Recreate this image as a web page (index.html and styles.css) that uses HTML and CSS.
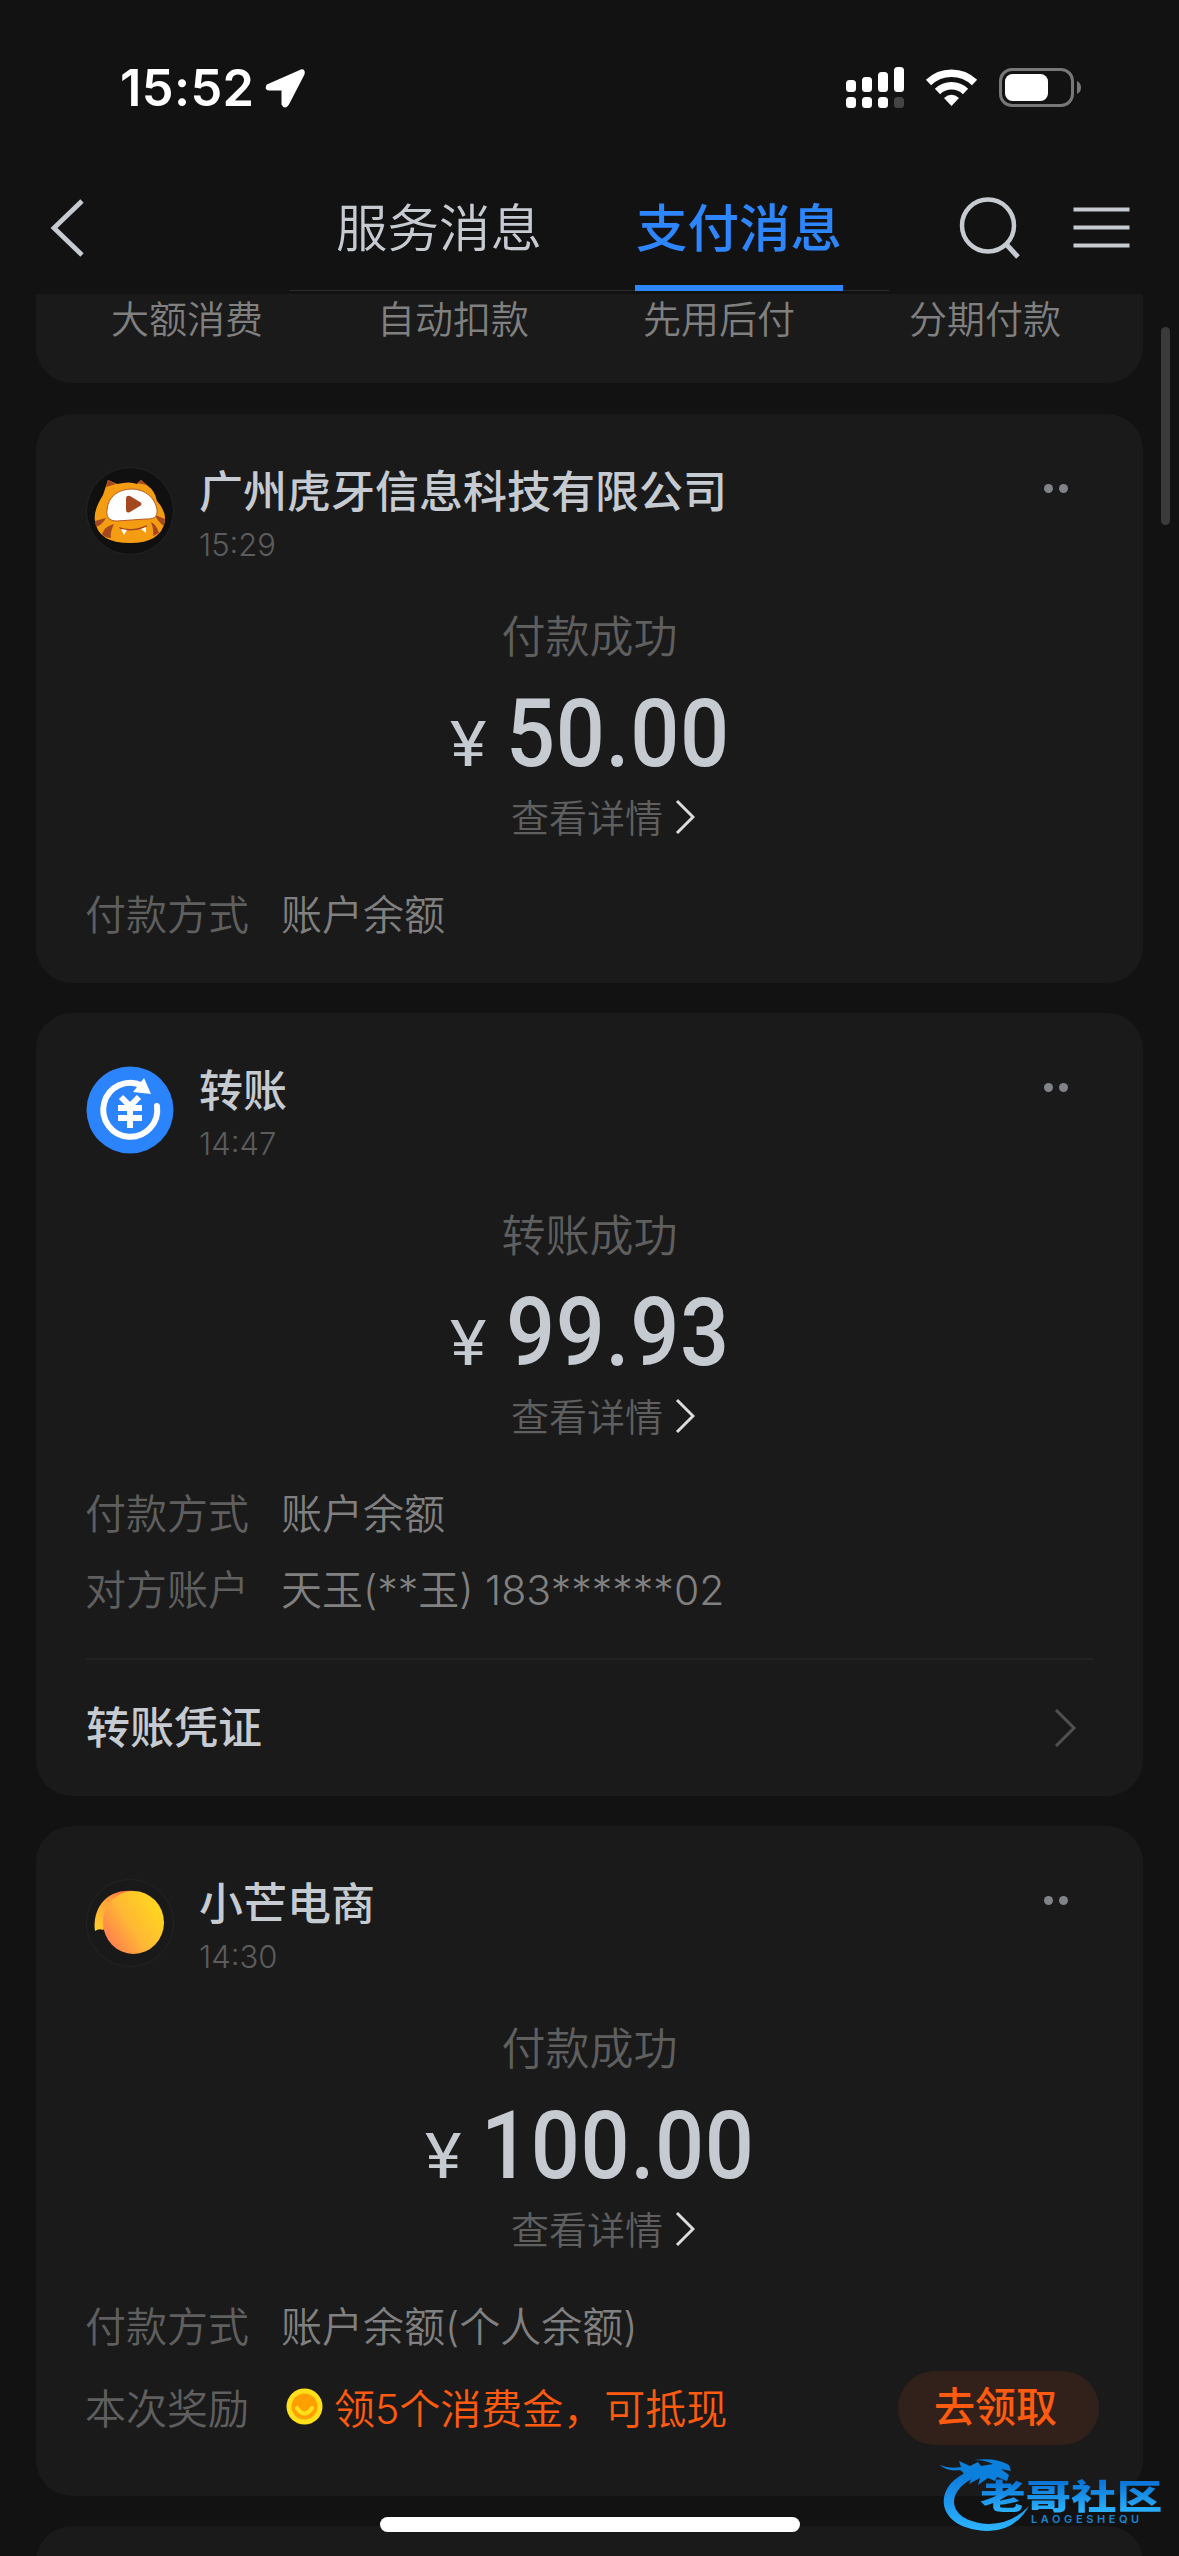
FILE: index.html
```html
<!DOCTYPE html>
<html lang="zh-CN">
<head>
<meta charset="utf-8">
<title>支付消息</title>
<link rel="stylesheet" href="styles.css">
</head>
<body>
<div class="screen">
  <header class="statusbar">
    <span class="clock">15:52</span>
    <svg class="location" width="40" height="40" viewBox="0 0 40 40"><path d="M36 3L3 17.500Q1 21 4 21H18V36Q20 40 22.500 36L38 6Q39 2 36 3Z" fill="#fff" stroke="#fff" stroke-width="3" stroke-linejoin="round"/></svg>
    <svg class="signals" width="236" height="42" viewBox="0 0 236 42">
      <g fill="#fff">
        <rect x="0" y="13" width="10" height="12" rx="3.500"/><rect x="16" y="10" width="10" height="15" rx="3.500"/><rect x="32" y="5" width="10" height="20" rx="3.500"/><rect x="48" y="0" width="10" height="25" rx="3.500"/>
        <rect x="0" y="30" width="10" height="11" rx="3.500"/><rect x="16" y="30" width="10" height="11" rx="3.500"/><rect x="32" y="30" width="10" height="11" rx="3.500"/>
      </g>
      <rect x="48" y="30" width="10" height="11" rx="3.500" fill="#444"/>
      <g fill="none" stroke="#fff" stroke-width="7.500"><path d="M82.500 15.500A33 33 0 0 1 128.500 15.500"/><path d="M91.500 24.500A20 20 0 0 1 119.500 24.500"/></g>
      <path d="M98 31Q105.500 24.500 113 31L105.500 39Z" fill="#fff"/>
      <rect x="154.500" y="2.500" width="72" height="36" rx="11.500" fill="none" stroke="#777" stroke-width="3"/>
      <rect x="159" y="7" width="43" height="27" rx="7.500" fill="#fff"/>
      <path d="M231 14Q235 16 235 20.500T231 27Z" fill="#777"/>
    </svg>
  </header>

  <nav class="navbar">
    <svg class="back" width="36" height="58" viewBox="0 0 36 58"><path d="M32 2L4 29L32 56" fill="none" stroke="#c6cad1" stroke-width="4.800"/></svg>
    <div class="tabs">
      <span class="tab">服务消息</span>
      <span class="tab active">支付消息</span>
    </div>
    <svg class="tools" width="172" height="64" viewBox="0 0 172 64" fill="none" stroke="#c6cad1"><circle cx="30" cy="29.500" r="26" stroke-width="4.500"/><path d="M48 48L60 61" stroke-width="5"/><path d="M115.500 13.500h56M115.500 31.500h56M115.500 49.500h56" stroke-width="4.200"/></svg>
  </nav>

  <main class="feed">
    <section class="shortcuts"><span>大额消费</span><span>自动扣款</span><span>先用后付</span><span>分期付款</span></section>

    <article class="card">
      <div class="head">
        <svg class="avatar" viewBox="0 0 88 88">
          <circle cx="44" cy="44" r="43.500" fill="#101010" stroke="#242424"/>
          <path d="M17 28L22 13L31 17Q44 14 51 17L55 13L62 19Q69 24 71 34Q80 44 79 54Q75 76 44 76Q12 76 9 54Q7 44 17 28Z" fill="#f59d12"/>
          <path d="M20 20L22 13L30 17ZM51 16L55 13L61 18ZM9 54L20 51Q16 58 10 60ZM16 67Q19 59 28 57Q24 65 25 71Q19 71 16 67ZM79 52L69 48Q72 55 78 59ZM73 66Q70 57 65 55Q68 62 67 69Z" fill="#a5481f"/>
          <path d="M21 43C22 29 33 22 46 22S69 31 71 42C72 51 67 52 60 52L31 54C23 54 20 50 21 43Z" fill="#fff" stroke="#b55a20" stroke-width="1"/>
          <path d="M40 32Q40 28 44 29L54 35Q57 37 54 39L44 45Q40 47 40 42Z" fill="#a5481f"/>
          <path d="M33 60Q46 65 61 58L60.500 60Q46 66 34 62Z" fill="#a5481f"/><path d="M35 62L41 63L38 68ZM55 62L60 60L60 66Z" fill="#fff"/>
        </svg>
        <div class="who"><h2>广州虎牙信息科技有限公司</h2><time>15:29</time></div>
        <div class="more"><i></i><i></i></div>
      </div>
      <div class="state">付款成功</div>
      <div class="amount"><span class="yen">¥</span><b>50.00</b></div>
      <div class="detail">查看详情<svg width="20" height="36" viewBox="0 0 20 36"><path d="M2 2L18 18L2 34" fill="none" stroke="#dcdcdc" stroke-width="3"/></svg></div>
      <dl class="rows"><div><dt>付款方式</dt><dd>账户余额</dd></div></dl>
    </article>

    <article class="card transfer">
      <div class="head">
        <svg class="avatar" viewBox="0 0 88 88">
          <circle cx="44" cy="44" r="43.500" fill="#2b84fc"/>
          <path d="M56 19.500A27 27 0 1 0 71 40" fill="none" stroke="#fff" stroke-width="6" stroke-linecap="round"/>
          <path d="M58 12L65 28L47 26Z" fill="#fff"/>
          <path d="M35 31L44 40L53 31M32 42H56M32 52H56M44 40V62" fill="none" stroke="#fff" stroke-width="6"/>
        </svg>
        <div class="who"><h2>转账</h2><time>14:47</time></div>
        <div class="more"><i></i><i></i></div>
      </div>
      <div class="state">转账成功</div>
      <div class="amount"><span class="yen">¥</span><b>99.93</b></div>
      <div class="detail">查看详情<svg width="20" height="36" viewBox="0 0 20 36"><path d="M2 2L18 18L2 34" fill="none" stroke="#dcdcdc" stroke-width="3"/></svg></div>
      <dl class="rows"><div><dt>付款方式</dt><dd>账户余额</dd></div><div><dt>对方账户</dt><dd>天玉(**玉) 183******02</dd></div></dl>
      <div class="voucher"><span>转账凭证</span><svg width="24" height="40" viewBox="0 0 24 40"><path d="M3 2L21 20L3 38" fill="none" stroke="#505050" stroke-width="3"/></svg></div>
    </article>

    <article class="card reward">
      <div class="head">
        <svg class="avatar" viewBox="0 0 88 88">
          <defs><linearGradient id="mango" x1="0" y1=".75" x2=".8" y2=".2"><stop offset="0" stop-color="#ff7b50"/><stop offset=".5" stop-color="#ffb734"/><stop offset="1" stop-color="#ffd321"/></linearGradient><linearGradient id="peel" x1="0" y1="1" x2="1" y2="0"><stop offset="0" stop-color="#ffd22a"/><stop offset=".6" stop-color="#ff9b3b"/><stop offset="1" stop-color="#ff6548"/></linearGradient></defs>
          <circle cx="44" cy="44" r="43.500" fill="#191919" stroke="#242424"/>
          <path d="M9 52C6 29 21 9 48 12L17 51Q13 49 9 52Z" fill="url(#peel)"/>
          <ellipse cx="47.500" cy="43.500" rx="30.500" ry="31.500" fill="url(#mango)"/>
        </svg>
        <div class="who"><h2>小芒电商</h2><time>14:30</time></div>
        <div class="more"><i></i><i></i></div>
      </div>
      <div class="state">付款成功</div>
      <div class="amount"><span class="yen">¥</span><b>100.00</b></div>
      <div class="detail">查看详情<svg width="20" height="36" viewBox="0 0 20 36"><path d="M2 2L18 18L2 34" fill="none" stroke="#dcdcdc" stroke-width="3"/></svg></div>
      <dl class="rows"><div><dt>付款方式</dt><dd>账户余额(个人余额)</dd></div>
        <div><dt>本次奖励</dt><dd class="bonus"><svg width="37" height="37" viewBox="0 0 37 37"><circle cx="18.500" cy="18.500" r="18" fill="#ffe01b"/><circle cx="18.500" cy="18.500" r="13" fill="#ff9f00"/><path d="M11 20Q18.500 31 26 20" fill="none" stroke="#ffe01b" stroke-width="4" stroke-linecap="round"/></svg><span>领5个消费金，可抵现</span></dd><dd class="claim">去领取</dd></div></dl>
    </article>
    <article class="card next"></article>
  </main>

  <div class="scrollbar"></div>
  <div class="home"></div>
  <div class="watermark">
    <svg width="96" height="84" viewBox="0 0 96 84"><defs><linearGradient id="sea" x1="0" y1="0" x2="0" y2="1"><stop offset="0" stop-color="#0b76d8"/><stop offset="1" stop-color="#2db4ff"/></linearGradient></defs>
      <path d="M30 17C-9 31-6 76 48 77Q75 77 89 52Q72 70 49 70C6 68 3 36 38 22Z" fill="url(#sea)"/>
      <path d="M0 11Q9 15 21 13L19 7L30 12L38 8L41 12L53 10Q45 6 34 6Q56 3 69 11L71 17L61 15L69 21L67 27L57 23L55 27L48 24L38 31L40 24L29 30L32 23L22 25Q27 20 20 16Q7 18 0 11Z" fill="#0b7fdc"/></svg>
    <div class="brand"><strong>老哥社区</strong><small>LAOGESHEQU</small></div>
  </div>
</div>
</body>
</html>
```

FILE: styles.css
```css
* { box-sizing: border-box; margin: 0; padding: 0; }
body { width: 1179px; height: 2556px; background: #121212; overflow: hidden; }
.screen { position: relative; width: 1179px; height: 2556px; overflow: hidden; display: flex; flex-direction: column; color: #c6cad1; font-family: Inter, "Noto Sans CJK SC", sans-serif; }
svg { display: block; flex: none; }

.statusbar { height: 170px; flex: none; display: flex; align-items: flex-start; padding: 67px 97px 0 120px; }
.clock { width: 145px; font-size: 50.500px; line-height: 42px; font-weight: 600; color: #fff; letter-spacing: .4px; white-space: nowrap; }
.location { margin-top: 1px; }
.signals { margin-left: auto; }

.navbar { height: 124px; flex: none; display: flex; align-items: flex-start; padding: 0 49px 0 50px; }
.back { margin-top: 29px; }
.tabs { margin-left: 203px; width: 600px; height: 121px; border-bottom: 1px solid #2a2a2a; display: flex; padding-left: 46px; gap: 92px; }
.tab { width: 208px; height: 121px; font-size: 51.500px; line-height: 117px; text-align: center; font-weight: 350; white-space: nowrap; }
.tab.active { color: #2e86ff; font-weight: 500; border-bottom: 6px solid #2e86ff; }
.tools { margin-top: 26px; margin-left: auto; }

.feed { flex: none; padding: 0 36px; display: flex; flex-direction: column; }
.shortcuts { height: 89px; background: #1a1a1a; border-radius: 0 0 36px 36px; padding: 0 22px 0 18px; display: grid; grid-template-columns: repeat(4, 266px); font-size: 38px; line-height: 51px; font-weight: 350; color: #808080; text-align: center; }
.card { background: #1a1a1a; border-radius: 36px; margin-top: 31px; height: 569px; padding: 53px 50px 0; }
.transfer { height: 783px; margin-top: 30px; }
.reward { height: 670px; margin-top: 30px; }
.next { height: 100px; margin-top: 30px; }
.head { display: flex; height: 88px; }
.avatar { width: 88px; height: 88px; }
.who { margin-left: 25px; flex: 1; }
h2 { font-size: 44px; line-height: 50px; font-weight: 500; white-space: nowrap; }
time { display: block; font-size: 31px; line-height: 40px; margin-top: 8px; color: #5c5c5c; font-weight: 350; }
.more { display: flex; gap: 6px; padding: 17px 25px 0 0; }
.more i { width: 9px; height: 9px; border-radius: 50%; background: #808387; }
.state { margin-top: 53px; font-size: 44px; line-height: 58px; text-align: center; color: #5f5f5f; font-weight: 350; }
.amount { display: flex; justify-content: center; align-items: baseline; margin-top: 16px; height: 104px; line-height: 104px; font-family: Roboto, sans-serif; }
.yen { font-size: 63px; font-weight: 400; width: 56px; transform: scaleX(1.1); transform-origin: 0 50%; }
.amount b { font-size: 94px; font-weight: 500; letter-spacing: .7px; margin-right: -20px; transform: scaleX(.92); transform-origin: 0 50%; }
.reward .amount b { margin-right: -24px; }
.detail { display: flex; justify-content: center; align-items: center; gap: 12px; margin-top: -6px; padding-left: 27px; height: 70px; font-size: 38px; font-weight: 350; color: #5f5f5f; }
.detail svg { margin-top: 4px; }
.rows { margin: 37px 0 0 -1px; font-size: 41px; font-weight: 350; line-height: 56px; }
.rows > div { display: flex; align-items: center; height: 56px; }
.rows > div + div { margin-top: 20px; }
dt { width: 196px; color: #5f5f5f; }
dd { color: #808080; white-space: nowrap; }
.voucher { margin-top: 40px; border-top: 2px solid #222; height: 137px; display: flex; justify-content: space-between; align-items: center; padding-right: 16px; font-size: 44px; font-weight: 500; }
.voucher span { padding-bottom: 5px; }
.reward .rows > div + div { margin-top: 26px; }
.rows .bonus { color: #ff5b10; display: flex; align-items: center; gap: 11px; padding-left: 5px; }
.bonus svg { margin-top: -5px; }
.rows .claim { color: #ff5b10; background: #32201a; margin: -2px -6px 0 auto; width: 201px; height: 74px; border-radius: 37px; text-align: center; line-height: 72px; padding-right: 6px; font-weight: 500; }

.scrollbar { position: absolute; left: 1161px; top: 327px; width: 9px; height: 198px; border-radius: 5px; background: #3a3a3a; }
.home { position: absolute; left: 380px; top: 2517px; width: 420px; height: 15px; border-radius: 8px; background: #fff; }
.watermark { position: absolute; left: 940px; top: 2454px; display: flex; }
.brand { margin-left: -56px; padding-top: 23px; width: 184px; }
.brand strong { display: block; width: 136px; font-size: 34px; line-height: 40px; font-weight: 900; white-space: nowrap; background: linear-gradient(#0b76d8 15%, #2db4ff 90%); background-clip: text; -webkit-background-clip: text; color: transparent; transform: scaleX(1.34); transform-origin: 0 0; }
.brand small { display: block; margin: -4px 0 0 51px; font-size: 11px; line-height: 12px; font-weight: 600; letter-spacing: 3.600px; color: #1b83cf; }
```
